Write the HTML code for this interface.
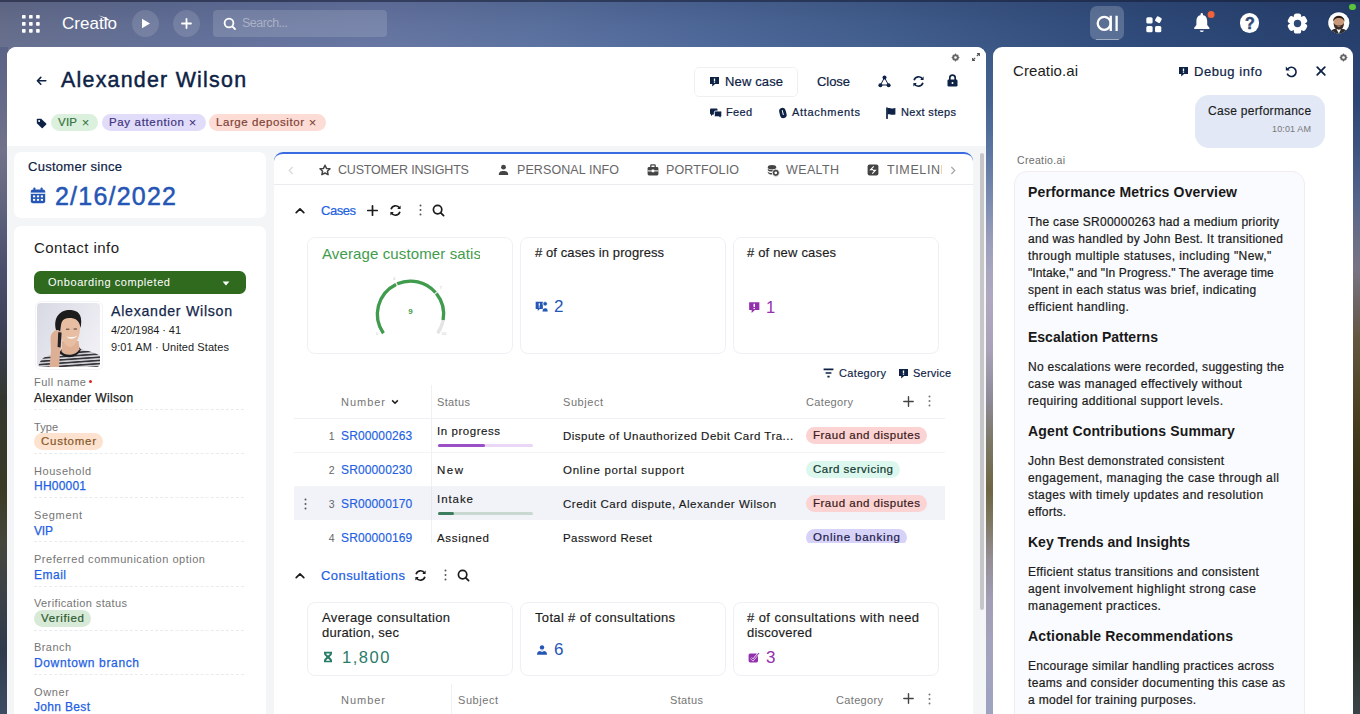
<!DOCTYPE html><html lang="en"><head><meta charset="utf-8"><title>Alexander Wilson</title><style>
*{box-sizing:border-box;margin:0;padding:0}
html,body{width:1360px;height:714px;overflow:hidden}
body{position:relative;font-family:"Liberation Sans",sans-serif;background:#3a4f7d;color:#181818}
.abs,.t,svg.i{position:absolute}
svg.i{overflow:visible}
.t{white-space:pre;display:block}
#bg{left:0;top:0;width:1360px;height:714px;background:linear-gradient(90deg,#69718f 0%,#65729a 12%,#6878a4 28%,#5d74a2 40%,#4f6a9b 52%,#43608f 65%,#395584 75%,#2f4b7b 85%,#27406d 100%)}
#bgl{left:0;top:47px;width:8px;height:667px;background:linear-gradient(180deg,#5a6286 0.0%,#666a88 7.9%,#72728a 15.4%,#62657f 22.9%,#4a4e6c 33.4%,#3d4158 42.4%,#34372f 52.9%,#3a3a25 66.4%,#45463b 73.9%,#3a4048 82.9%,#2f3b4c 90.4%,#3d4b63 100.0%)}
#bgm{left:985px;top:47px;width:9px;height:667px;background:linear-gradient(180deg,#3c5886 0.0%,#46628f 7.9%,#5b74a0 15.4%,#7a8bb0 22.9%,#9a9dba 28.9%,#a7a5bf 33.4%,#b0a8c0 37.9%,#a9a2b8 45.4%,#8e8a98 52.9%,#7c7868 58.9%,#6f6544 66.4%,#7d765f 70.9%,#958e96 76.9%,#a19db5 82.9%,#a4a3bd 90.4%,#9ea3c0 100.0%)}
#bgr{left:1352px;top:47px;width:8px;height:667px;background:linear-gradient(180deg,#28406e 0.0%,#2c4674 7.9%,#3d547f 15.4%,#55648a 22.9%,#6b6f86 28.9%,#787383 33.4%,#6f6668 37.9%,#63563f 43.9%,#4f4424 52.9%,#40381a 58.9%,#332d15 66.4%,#28280f 73.9%,#23271a 82.9%,#2b322c 90.4%,#3a4448 100.0%)}
#bgv{left:0;top:0;width:1360px;height:50px;background:linear-gradient(180deg,rgba(16,24,56,.16) 0%,rgba(16,24,56,.06) 50%,rgba(16,24,56,0) 100%)}
#topline{left:0;top:0;width:1360px;height:1.5px;background:rgba(20,25,50,.55)}
#main{left:7px;top:47px;width:979px;height:667px;background:#f4f5f7;border-radius:9px 9px 0 0;overflow:hidden}
#mainhead{left:0;top:0;width:979px;height:99px;background:#fff}
#side{left:993px;top:47px;width:360px;height:667px;background:#fff;border-radius:9px 9px 0 0;overflow:hidden}
.card{background:#fff;border-radius:7px}
.kpi{background:#fff;border:1px solid #eff0f4;border-radius:8px}
.pill{border-radius:9px;height:17px}
.dash{height:0;border-top:1px dashed #e9ebee}
</style></head><body><div id="bg" class="abs"></div><div id="bgl" class="abs"></div><div id="bgm" class="abs"></div><div id="bgr" class="abs"></div><div id="bgv" class="abs"></div><div id="topline" class="abs"></div><header id="topbar"><svg class="i" style="left:21.6px;top:14.8px" width="18" height="18" viewBox="0 0 18 18" ><rect x="0.00" y="0.00" width="3.6" height="3.6" rx="0.7" fill="#fff"/><rect x="0.00" y="7.05" width="3.6" height="3.6" rx="0.7" fill="#fff"/><rect x="0.00" y="14.10" width="3.6" height="3.6" rx="0.7" fill="#fff"/><rect x="7.05" y="0.00" width="3.6" height="3.6" rx="0.7" fill="#fff"/><rect x="7.05" y="7.05" width="3.6" height="3.6" rx="0.7" fill="#fff"/><rect x="7.05" y="14.10" width="3.6" height="3.6" rx="0.7" fill="#fff"/><rect x="14.10" y="0.00" width="3.6" height="3.6" rx="0.7" fill="#fff"/><rect x="14.10" y="7.05" width="3.6" height="3.6" rx="0.7" fill="#fff"/><rect x="14.10" y="14.10" width="3.6" height="3.6" rx="0.7" fill="#fff"/></svg><span class="t" style="left:62.0px;top:12.5px;font-size:17px;line-height:22px;color:#fff;letter-spacing:0.03px;">Creatio</span><svg class="i" style="left:97.6px;top:14.6px" width="14" height="7" viewBox="0 0 14 7" ><path d="M0.5 0.5 C4.6 1.2 8.8 2.8 12 5.3 L4.6 5.3 L7.4 4 C5.2 2.6 2.8 1.4 0.5 0.5 Z" fill="#fff"/></svg><div class="abs" style="left:131.5px;top:9.5px;width:27px;height:27px;border-radius:50%;background:rgba(255,255,255,.13)"></div><svg class="i" style="left:141px;top:17.5px" width="10" height="11" viewBox="0 0 10 11" ><path d="M1 0.8 L9 5.5 L1 10.2 Z" fill="#fff"/></svg><div class="abs" style="left:172.5px;top:9.5px;width:27px;height:27px;border-radius:50%;background:rgba(255,255,255,.13)"></div><svg class="i" style="left:180.5px;top:17.5px" width="11" height="11" viewBox="0 0 11 11" ><path d="M5.5 1 V10 M1 5.5 H10" stroke="#fff" stroke-width="1.8" stroke-linecap="round"/></svg><div class="abs" style="left:213px;top:10px;width:174px;height:26.5px;border-radius:4px;background:rgba(255,255,255,.14)"></div><svg class="i" style="left:222.5px;top:16.5px" width="14" height="14" viewBox="0 0 14 14" ><circle cx="6" cy="6" r="4.4" fill="none" stroke="#fff" stroke-width="1.8"/><path d="M9.3 9.3 L12 12" stroke="#fff" stroke-width="1.8" stroke-linecap="round"/></svg><span class="t" style="left:242.0px;top:15.0px;font-size:12.5px;line-height:16px;color:rgba(255,255,255,.38);letter-spacing:-0.50px;">Search...</span><div class="abs" style="left:1090px;top:6px;width:34px;height:34px;border-radius:7px;background:rgba(255,255,255,.2)"></div><div class="abs" style="left:1095.5px;top:38.6px;width:23px;height:1.4px;background:rgba(255,255,255,.42);border-radius:1px"></div><svg class="i" style="left:1095px;top:14px" width="24" height="19" viewBox="0 0 24 19" ><title>ai</title><circle cx="9.2" cy="9.3" r="6.5" fill="none" stroke="#fff" stroke-width="2.3"/><path d="M15.75 1.7 V16.9 M21.6 1.7 V16.9" stroke="#fff" stroke-width="2.3"/></svg><svg class="i" style="left:1146px;top:15.5px" width="17" height="17" viewBox="0 0 17 17" ><rect x="0.3" y="1.2" width="6.3" height="6.3" rx="1.5" fill="#fff"/><rect x="0.3" y="9.9" width="6.3" height="6.3" rx="1.5" fill="#fff"/><rect x="9" y="9.9" width="6.3" height="6.3" rx="1.5" fill="#fff"/><rect x="9.6" y="0.9" width="5.6" height="5.6" rx="1.3" fill="#fff" transform="rotate(30 12.4 3.7)"/></svg><svg class="i" style="left:1192px;top:12px" width="24" height="23" viewBox="0 0 24 23" ><path d="M9.8 3 C5.8 3 4.4 6 4.4 9.2 V13 L2.2 15.8 V17 H17.4 V15.8 L15.2 13 V9.2 C15.2 6 13.8 3 9.8 3 Z" fill="#fff"/><path d="M7.7 18.4 A2.2 2.2 0 0 0 11.9 18.4 Z" fill="#fff"/><rect x="8.6" y="1" width="2.4" height="3.4" rx="1.2" fill="#fff"/><circle cx="19.1" cy="2.6" r="3.5" fill="#f0623a"/></svg><div class="abs" style="left:1240px;top:13.3px;width:19.4px;height:19.4px;border-radius:50%;background:#fff"></div><span class="t" style="left:1244.9px;top:12.9px;font-size:16px;line-height:21px;color:#2f4a78;font-weight:700;-webkit-text-stroke:0.5px #2f4a78;">?</span><svg class="i" style="left:1286.5px;top:12.7px" width="21" height="21" viewBox="0 0 21 21" ><g transform="translate(10.5 10.5)"><rect x="-3.7" y="-10.1" width="7.4" height="7" rx="2.6" fill="#fff" transform="rotate(0)"/><rect x="-3.7" y="-10.1" width="7.4" height="7" rx="2.6" fill="#fff" transform="rotate(60)"/><rect x="-3.7" y="-10.1" width="7.4" height="7" rx="2.6" fill="#fff" transform="rotate(120)"/><rect x="-3.7" y="-10.1" width="7.4" height="7" rx="2.6" fill="#fff" transform="rotate(180)"/><rect x="-3.7" y="-10.1" width="7.4" height="7" rx="2.6" fill="#fff" transform="rotate(240)"/><rect x="-3.7" y="-10.1" width="7.4" height="7" rx="2.6" fill="#fff" transform="rotate(300)"/><circle r="7.4" fill="#fff"/><circle r="3.7" fill="#2f4a78"/></g></svg><svg class="i" style="left:1327.6px;top:12.4px" width="22" height="22" viewBox="0 0 22 22" ><defs><clipPath id="avc"><circle cx="10.8" cy="10.8" r="10.6"/></clipPath></defs><circle cx="10.8" cy="10.8" r="11.3" fill="#22395f"/><g clip-path="url(#avc)"><rect width="22" height="22" fill="#fdfdfd"/><path d="M1.6 22 C2.6 17.6 6 16.8 8.2 16.4 L10.8 21.4 L13.4 16.4 C15.6 16.8 19 17.6 20 22 Z" fill="#2c2c31"/><ellipse cx="10.8" cy="10.2" rx="5.2" ry="6.6" fill="#c99879"/><path d="M5.3 9.8 C3.8 2.2 17.8 2.2 16.3 9.8 C15.5 6.8 13.6 5.8 10.8 6 C8 5.8 6.1 6.8 5.3 9.8 Z" fill="#2a1d18"/><path d="M5.6 10.8 C5.8 17 8.6 17.7 10.8 17.7 C13 17.7 15.8 17 16 10.8 C14.8 13.2 13 13.6 10.8 13.6 C8.6 13.6 6.8 13.2 5.6 10.8 Z" fill="#3f2c25"/><path d="M8.8 14 C9.8 15 11.8 15 12.8 14 C11.8 14.4 9.8 14.4 8.8 14 Z" fill="#f6ebe6"/></g></svg><div class="abs" style="left:1349.1px;top:3.9px;width:6.6px;height:6.6px;border-radius:50%;background:#5ac43b"></div></header><main id="main" class="abs"><div id="mainhead" class="abs"><svg class="i" style="left:28.5px;top:29px" width="11" height="10" viewBox="0 0 11 10" ><path d="M9.8 4.8 H1.6 M4.8 1.4 L1.4 4.8 L4.8 8.2" fill="none" stroke="#0d2245" stroke-width="1.6" stroke-linecap="round" stroke-linejoin="round"/></svg><span class="t" style="left:54.0px;top:19.3px;font-size:21.4px;line-height:28px;color:#0d2245;letter-spacing:1.24px;-webkit-text-stroke:0.45px #0d2245;">Alexander Wilson</span><svg class="i" style="left:29px;top:70.5px" width="11" height="11" viewBox="0 0 11 11" ><path d="M0.8 1.6 Q0.8 0.8 1.6 0.8 H5.2 L10.2 5.6 Q10.6 6.1 10.2 6.6 L6.7 10.1 Q6.2 10.5 5.7 10.1 L0.8 5.2 Z" fill="#0d2245"/><circle cx="3.1" cy="3.1" r="1" fill="#fff"/></svg><div class="pill abs" style="left:44px;top:67px;width:47px;height:17px;background:#dcf1dd"></div><span class="t" style="left:51.0px;top:68.3px;font-size:11.5px;line-height:15px;color:#357440;letter-spacing:0.23px;-webkit-text-stroke:0.2px #357440;">VIP</span><span class="t" style="left:74.7px;top:67.3px;font-size:13px;line-height:17px;color:#2f6f3a;">×</span><div class="pill abs" style="left:95px;top:67px;width:103.5px;height:17px;background:#e1dcfa"></div><span class="t" style="left:102.0px;top:68.3px;font-size:11.5px;line-height:15px;color:#40347f;letter-spacing:0.65px;-webkit-text-stroke:0.2px #40347f;">Pay attention</span><span class="t" style="left:181.8px;top:67.3px;font-size:13px;line-height:17px;color:#3b2f78;">×</span><div class="pill abs" style="left:202px;top:67px;width:116.5px;height:17px;background:#fcdcd5"></div><span class="t" style="left:209.0px;top:68.3px;font-size:11.5px;line-height:15px;color:#804236;letter-spacing:0.58px;-webkit-text-stroke:0.2px #804236;">Large depositor</span><span class="t" style="left:301.8px;top:67.3px;font-size:13px;line-height:17px;color:#7a3b30;">×</span><svg class="i" style="left:943.5px;top:5.5px" width="9" height="9" viewBox="0 0 9 9" ><circle cx="4.5" cy="4.5" r="2.5" fill="none" stroke="#666" stroke-width="1.7"/><path d="M4.5 0.6 V8.4 M0.6 4.5 H8.4 M1.8 1.8 L7.2 7.2 M7.2 1.8 L1.8 7.2" stroke="#666" stroke-width="1.1"/><circle cx="4.5" cy="4.5" r="1.3" fill="#fff"/></svg><svg class="i" style="left:965px;top:6px" width="8" height="8" viewBox="0 0 8 8" ><path d="M5 0.6 H7.4 V3 M7.2 0.8 L4.8 3.2 M3 7.4 H0.6 V5 M0.8 7.2 L3.2 4.8" fill="none" stroke="#555" stroke-width="1.1"/></svg><div class="abs" style="left:686.5px;top:19.5px;width:104px;height:30px;border:1px solid #f0f0f2;border-radius:5px;background:#fff"></div><svg class="i" style="left:702px;top:28.5px" width="11" height="12" viewBox="0 0 11 12" ><path d="M1 1 H10 V8 H6 L3.2 10.6 V8 H1 Z" fill="#0d2245"/><path d="M5.5 2.4 V5.4 M5.5 6.2 V7" stroke="#fff" stroke-width="1.3"/></svg><span class="t" style="left:718.0px;top:26.0px;font-size:13px;line-height:17px;color:#0d2245;letter-spacing:0.13px;-webkit-text-stroke:0.2px #0d2245;">New case</span><span class="t" style="left:810.0px;top:26.0px;font-size:13px;line-height:17px;color:#0d2245;letter-spacing:-0.06px;-webkit-text-stroke:0.2px #0d2245;">Close</span><svg class="i" style="left:870.5px;top:27.5px" width="13" height="13" viewBox="0 0 13 13" ><path d="M6.5 2.5 L2.5 10 H10.5 Z" fill="none" stroke="#0d2245" stroke-width="1"/><circle cx="6.5" cy="2.6" r="2" fill="#0d2245"/><circle cx="2.4" cy="10.2" r="2" fill="#0d2245"/><circle cx="10.6" cy="10.2" r="2" fill="#0d2245"/></svg><svg class="i" style="left:904.5px;top:27.5px" width="13" height="13" viewBox="0 0 13 13" ><path d="M10.6 4.2 A4.6 4.6 0 0 0 2.1 5.2 M2.4 8.8 A4.6 4.6 0 0 0 10.9 7.8" fill="none" stroke="#0d2245" stroke-width="1.7"/><path d="M11.6 1.6 V5 H8.2 Z M1.4 11.4 V8 H4.8 Z" fill="#0d2245"/></svg><svg class="i" style="left:940px;top:27px" width="11" height="13" viewBox="0 0 11 13" ><rect x="0.5" y="5.4" width="10" height="7.2" rx="1.4" fill="#0d2245"/><path d="M2.8 6 V3.8 A2.7 2.7 0 0 1 8.2 3.8 V6" fill="none" stroke="#0d2245" stroke-width="1.7"/><circle cx="5.5" cy="9" r="1" fill="#fff"/></svg><svg class="i" style="left:702px;top:59.5px" width="14" height="12" viewBox="0 0 14 12" ><path d="M2.2 1.6 H7.4 Q8.6 1.6 8.6 2.8 V6.2 Q8.6 7.4 7.4 7.4 H3.8 L2 9 V7.4 Q1 7.2 1 6.2 V2.8 Q1 1.6 2.2 1.6 Z" fill="#0d2245"/><path d="M6.6 4 H11.6 Q12.8 4 12.8 5.2 V8.6 Q12.8 9.6 11.8 9.8 V11.4 L10 9.8 H6.6 Q5.4 9.8 5.4 8.6 V5.2 Q5.4 4 6.6 4 Z" fill="#0d2245" stroke="#fff" stroke-width="0.9"/></svg><span class="t" style="left:719.0px;top:58.0px;font-size:11px;line-height:14px;color:#0d2245;letter-spacing:0.31px;-webkit-text-stroke:0.2px #0d2245;">Feed</span><svg class="i" style="left:770.5px;top:59.5px" width="10" height="12" viewBox="0 0 10 12" ><g transform="rotate(-14 5 6)"><rect x="1.6" y="0.8" width="6.6" height="10.4" rx="3.3" fill="#0d2245"/><path d="M4.9 3.4 V7.6" stroke="#fff" stroke-width="1" stroke-linecap="round"/></g></svg><span class="t" style="left:785.0px;top:58.0px;font-size:11px;line-height:14px;color:#0d2245;letter-spacing:0.69px;-webkit-text-stroke:0.2px #0d2245;">Attachments</span><svg class="i" style="left:878px;top:60px" width="12" height="12" viewBox="0 0 12 12" ><path d="M2 1 V11.2" stroke="#0d2245" stroke-width="1.7" stroke-linecap="round"/><path d="M2.4 1.2 C4.4 0.2 6 2.2 10.4 1 V7.4 C6 8.6 4.4 6.6 2.4 7.6 Z" fill="#0d2245"/></svg><span class="t" style="left:894.0px;top:58.0px;font-size:11px;line-height:14px;color:#0d2245;letter-spacing:0.34px;-webkit-text-stroke:0.2px #0d2245;">Next steps</span></div><section id="left"><div class="card abs" style="left:7px;top:105px;width:252px;height:66px;"></div><span class="t" style="left:21.0px;top:110.8px;font-size:13px;line-height:17px;color:#0d2245;letter-spacing:0.28px;-webkit-text-stroke:0.2px #0d2245;">Customer since</span><svg class="i" style="left:23px;top:140px" width="16" height="17" viewBox="0 0 16 17" ><rect x="0.8" y="2.4" width="14.4" height="13.8" rx="2" fill="#2556b5"/><rect x="3.4" y="0.4" width="2" height="4" rx="0.8" fill="#2556b5"/><rect x="10.6" y="0.4" width="2" height="4" rx="0.8" fill="#2556b5"/><rect x="0.8" y="5.6" width="14.4" height="1.2" fill="#fff"/><rect x="3.0" y="8.4" width="2.2" height="1.9" fill="#fff"/><rect x="3.0" y="11.9" width="2.2" height="1.9" fill="#fff"/><rect x="6.9" y="8.4" width="2.2" height="1.9" fill="#fff"/><rect x="6.9" y="11.9" width="2.2" height="1.9" fill="#fff"/><rect x="10.8" y="8.4" width="2.2" height="1.9" fill="#fff"/><rect x="10.8" y="11.9" width="2.2" height="1.9" fill="#fff"/></svg><span class="t" style="left:48.0px;top:133.0px;font-size:25px;line-height:32px;color:#2556b5;letter-spacing:1.22px;-webkit-text-stroke:0.5px #2556b5;">2/16/2022</span><div class="card abs" style="left:7px;top:179px;width:252px;height:500px;"></div><span class="t" style="left:27.0px;top:191.0px;font-size:15px;line-height:20px;color:#1c1c1c;letter-spacing:0.45px;">Contact info</span><div class="abs" style="left:27px;top:223.5px;width:212px;height:23.5px;background:#2f6a1f;border-radius:6.5px"></div><span class="t" style="left:41.0px;top:228.0px;font-size:11px;line-height:14px;color:#fff;letter-spacing:0.56px;">Onboarding completed</span><svg class="i" style="left:214.5px;top:233.5px" width="8" height="5" viewBox="0 0 8 5" ><path d="M0.6 0.6 H7.4 L4 4.4 Z" fill="#fff"/></svg><div class="abs" style="left:27.5px;top:253.5px;width:68px;height:69px;border:1px solid #f3f4f7;border-radius:6px;background:#fff"></div><svg class="i" style="left:30px;top:256px" width="63" height="64" viewBox="0 0 63 64" ><defs><clipPath id="phc"><rect width="63" height="64" rx="4"/></clipPath><linearGradient id="phbg" x1="0" y1="0" x2="1" y2="0.6"><stop offset="0" stop-color="#d9d9e5"/><stop offset="0.6" stop-color="#e6e6ee"/><stop offset="1" stop-color="#efeff4"/></linearGradient><pattern id="str" width="6" height="3.2" patternUnits="userSpaceOnUse" patternTransform="rotate(-4)"><rect width="6" height="3.2" fill="#d9d9dd"/><rect width="6" height="1.7" fill="#34343a"/></pattern><filter id="phb" x="-5%" y="-5%" width="110%" height="110%"><feGaussianBlur stdDeviation="0.45"/></filter></defs><g clip-path="url(#phc)"><rect width="63" height="64" fill="url(#phbg)"/><g filter="url(#phb)"><path d="M1.5 64 C2 58 6 53.5 14 52 L26 48 L42 46 C52 48 60 50 63 53 L63 64 Z" fill="url(#str)"/><path d="M22.5 49 C26 56.5 40 56 44 46.5 L42.5 44.5 L25 46 Z" fill="#1b1b20"/><path d="M25 38 L24.5 48.5 C28 53.5 38.5 53 42.5 46.2 L41.5 38 Z" fill="#dfb094"/><path d="M23.5 24 C23 15 29 12.5 34.5 13 C40.5 13.5 43.5 18 43 26 C42.6 34 39.5 41 35 43.6 C31.5 45.2 27 41 24.5 35 Z" fill="#e8bea2"/><path d="M19 27 C15.5 13 25 5.5 35.5 7.2 C43.5 8.2 45.5 15 43.6 25 C42.6 20 41 16.5 36.5 15.5 C31 14.5 26.5 15 24.6 19.5 C23.6 22.5 23.8 26 23 30 Z" fill="#1c1a1d"/><path d="M29.5 33.2 C32 36.8 37.5 36.6 40 32.8 C37.5 34.3 32 34.5 29.5 33.2 Z" fill="#fbf6f3"/><path d="M29 26.2 H32.4 M36.6 26 H40" stroke="#3a2a24" stroke-width="0.9"/><path d="M20 27 C16.5 27.5 13.5 31 13.5 36 L14 48 L12.5 64 L22 64 L23 49 C24.5 44 24.5 38 24.6 33 C24.6 29.5 22.6 26.8 20 27 Z" fill="#ddb095"/><path d="M21.2 29.2 L24.6 29.6 L23.6 44.6 L20.6 44 Z" fill="#202026"/></g></g></svg><span class="t" style="left:104.0px;top:255.0px;font-size:14.2px;line-height:18px;color:#13274b;letter-spacing:0.71px;-webkit-text-stroke:0.25px #13274b;">Alexander Wilson</span><span class="t" style="left:104.0px;top:275.5px;font-size:11px;line-height:14px;color:#1c1c1c;letter-spacing:-0.07px;">4/20/1984 · 41</span><span class="t" style="left:104.0px;top:293.0px;font-size:11px;line-height:14px;color:#1c1c1c;letter-spacing:0.08px;">9:01 AM · United States</span><span class="t" style="left:27.0px;top:328.4px;font-size:11px;line-height:14px;color:#757575;letter-spacing:0.46px;">Full name</span><div class="abs" style="left:82px;top:332.8px;width:3px;height:3px;border-radius:50%;background:#d92a1c"></div><span class="t" style="left:27.0px;top:343.0px;font-size:12px;line-height:16px;color:#181818;letter-spacing:0.38px;-webkit-text-stroke:0.25px #181818;">Alexander Wilson</span><div class="dash abs" style="left:27px;top:362.0px;width:210px;height:0px;"></div><span class="t" style="left:27.0px;top:372.5px;font-size:11px;line-height:14px;color:#757575;letter-spacing:0.05px;">Type</span><div class="pill abs" style="left:27px;top:386.15px;width:69px;height:17px;background:#fde2cf"></div><span class="t" style="left:34.0px;top:387.1px;font-size:11.5px;line-height:15px;color:#85572a;letter-spacing:0.73px;-webkit-text-stroke:0.2px #85572a;">Customer</span><div class="dash abs" style="left:27px;top:406.15px;width:210px;height:0px;"></div><span class="t" style="left:27.0px;top:416.7px;font-size:11px;line-height:14px;color:#757575;letter-spacing:0.55px;">Household</span><span class="t" style="left:27.0px;top:431.3px;font-size:12px;line-height:16px;color:#235fe3;letter-spacing:0.22px;-webkit-text-stroke:0.25px #235fe3;">HH00001</span><div class="dash abs" style="left:27px;top:450.3px;width:210px;height:0px;"></div><span class="t" style="left:27.0px;top:460.8px;font-size:11px;line-height:14px;color:#757575;letter-spacing:0.66px;">Segment</span><span class="t" style="left:27.0px;top:475.5px;font-size:12px;line-height:16px;color:#235fe3;letter-spacing:-0.17px;-webkit-text-stroke:0.25px #235fe3;">VIP</span><div class="dash abs" style="left:27px;top:494.45000000000005px;width:210px;height:0px;"></div><span class="t" style="left:27.0px;top:505.0px;font-size:11px;line-height:14px;color:#757575;letter-spacing:0.52px;">Preferred communication option</span><span class="t" style="left:27.0px;top:519.6px;font-size:12px;line-height:16px;color:#235fe3;letter-spacing:0.50px;-webkit-text-stroke:0.25px #235fe3;">Email</span><div class="dash abs" style="left:27px;top:538.6px;width:210px;height:0px;"></div><span class="t" style="left:27.0px;top:549.1px;font-size:11px;line-height:14px;color:#757575;letter-spacing:0.38px;">Verification status</span><div class="pill abs" style="left:27px;top:562.75px;width:57px;height:17px;background:#d7ead7"></div><span class="t" style="left:34.0px;top:563.8px;font-size:11.5px;line-height:15px;color:#2d5a2f;letter-spacing:0.66px;-webkit-text-stroke:0.2px #2d5a2f;">Verified</span><div class="dash abs" style="left:27px;top:582.75px;width:210px;height:0px;"></div><span class="t" style="left:27.0px;top:593.3px;font-size:11px;line-height:14px;color:#757575;letter-spacing:0.43px;">Branch</span><span class="t" style="left:27.0px;top:607.9px;font-size:12px;line-height:16px;color:#235fe3;letter-spacing:0.64px;-webkit-text-stroke:0.25px #235fe3;">Downtown branch</span><div class="dash abs" style="left:27px;top:626.9px;width:210px;height:0px;"></div><span class="t" style="left:27.0px;top:637.5px;font-size:11px;line-height:14px;color:#757575;letter-spacing:0.65px;">Owner</span><span class="t" style="left:27.0px;top:652.0px;font-size:12px;line-height:16px;color:#235fe3;letter-spacing:0.33px;-webkit-text-stroke:0.25px #235fe3;">John Best</span><div class="dash abs" style="left:27px;top:671.05px;width:210px;height:0px;"></div></section><section id="center"><div class="abs" style="left:267px;top:104.5px;width:699px;height:580px;background:#fff;border-top:2.6px solid #3a6be0;border-radius:9px 9px 0 0"></div><div class="abs" style="left:267px;top:137.4px;width:699px;height:1px;background:#eaecef"></div><div class="abs" style="left:973px;top:106px;width:4px;height:457px;background:#c6c6c9;border-radius:2px"></div><svg class="i" style="left:281px;top:118.5px" width="6" height="9" viewBox="0 0 6 9" ><path d="M4.6 1 L1.2 4.5 L4.6 8" fill="none" stroke="#d6d8dc" stroke-width="1.2"/></svg><svg class="i" style="left:943px;top:118.5px" width="6" height="9" viewBox="0 0 6 9" ><path d="M1.4 1 L4.8 4.5 L1.4 8" fill="none" stroke="#a3a5a9" stroke-width="1.2"/></svg><svg class="i" style="left:311.5px;top:117px" width="12" height="12" viewBox="0 0 12 12" ><path d="M6 1.2 L7.5 4.4 L11 4.8 L8.4 7.2 L9.1 10.7 L6 9 L2.9 10.7 L3.6 7.2 L1 4.8 L4.5 4.4 Z" fill="none" stroke="#444" stroke-width="1.5" stroke-linejoin="round"/></svg><span class="t" style="left:331.0px;top:115.0px;font-size:12.5px;line-height:16px;color:#666668;letter-spacing:-0.18px;">CUSTOMER INSIGHTS</span><svg class="i" style="left:490.5px;top:117px" width="11" height="12" viewBox="0 0 11 12" ><circle cx="5.5" cy="3.2" r="2.4" fill="#444"/><path d="M0.8 11 C0.8 7.6 2.8 7 5.5 7 C8.2 7 10.2 7.6 10.2 11 Z" fill="#444"/></svg><span class="t" style="left:510.0px;top:115.0px;font-size:12.5px;line-height:16px;color:#666668;letter-spacing:0.09px;">PERSONAL INFO</span><svg class="i" style="left:640px;top:117px" width="12" height="12" viewBox="0 0 12 12" ><path d="M3.8 3 V1.6 Q3.8 0.8 4.6 0.8 H7.4 Q8.2 0.8 8.2 1.6 V3" fill="none" stroke="#444" stroke-width="1.3"/><rect x="0.6" y="3" width="10.8" height="8.4" rx="1.4" fill="#444"/><rect x="0.6" y="6.4" width="10.8" height="1" fill="#fff"/><rect x="4.7" y="5.6" width="2.6" height="2.6" rx="0.5" fill="#fff"/></svg><span class="t" style="left:659.0px;top:115.0px;font-size:12.5px;line-height:16px;color:#666668;letter-spacing:0.12px;">PORTFOLIO</span><svg class="i" style="left:759.5px;top:116.5px" width="13" height="13" viewBox="0 0 13 13" ><ellipse cx="5" cy="3.2" rx="4.2" ry="2.2" fill="#444"/><path d="M0.8 4.6 C1.4 6.6 8.6 6.6 9.2 4.6 V6 C8.6 8 1.4 8 0.8 6 Z" fill="#444"/><path d="M0.8 7.2 C1.2 8.8 4 9.2 5 9.1 V10.6 C3 10.7 1 10 0.8 8.6 Z" fill="#444"/><circle cx="8.8" cy="8.8" r="3.6" fill="#444" stroke="#fff" stroke-width="0.8"/><circle cx="8.8" cy="8.8" r="1.4" fill="#fff"/></svg><span class="t" style="left:779.0px;top:115.0px;font-size:12.5px;line-height:16px;color:#666668;letter-spacing:0.37px;">WEALTH</span><svg class="i" style="left:860px;top:117px" width="12" height="12" viewBox="0 0 12 12" ><rect x="0.6" y="0.6" width="10.8" height="10.8" rx="2" fill="#444"/><path d="M6.8 2.4 L3.6 5.6 H6 M5.2 9.6 L8.4 6.4 H6" fill="none" stroke="#fff" stroke-width="1.1"/></svg><div class="abs" style="left:880px;top:113px;width:55.3px;height:20px;overflow:hidden"><span class="t" style="left:0.0px;top:2.0px;font-size:12.5px;line-height:16px;color:#666668;letter-spacing:0.62px;">TIMELINE</span></div><svg class="i" style="left:288px;top:159.5px" width="10" height="7" viewBox="0 0 10 7" ><path d="M1.2 5.6 L5 1.8 L8.8 5.6" fill="none" stroke="#1c1c1c" stroke-width="1.7" stroke-linecap="round" stroke-linejoin="round"/></svg><span class="t" style="left:314.0px;top:154.5px;font-size:13px;line-height:17px;color:#235fe3;letter-spacing:-0.46px;-webkit-text-stroke:0.2px #235fe3;">Cases</span><svg class="i" style="left:359.5px;top:157.5px" width="11" height="11" viewBox="0 0 11 11" ><path d="M5.5 0.8 V10.2 M0.8 5.5 H10.2" stroke="#1c1c1c" stroke-width="1.7" stroke-linecap="round"/></svg><svg class="i" style="left:382px;top:156.5px" width="13" height="13" viewBox="0 0 13 13" ><path d="M10.6 4.2 A4.6 4.6 0 0 0 2.1 5.2 M2.4 8.8 A4.6 4.6 0 0 0 10.9 7.8" fill="none" stroke="#1c1c1c" stroke-width="1.7"/><path d="M11.6 1.6 V5 H8.2 Z M1.4 11.4 V8 H4.8 Z" fill="#1c1c1c"/></svg><svg class="i" style="left:411.5px;top:157px" width="3" height="12" viewBox="0 0 3 12" ><circle cx="1.5" cy="1.6" r="1" fill="#555"/><circle cx="1.5" cy="6" r="1" fill="#555"/><circle cx="1.5" cy="10.4" r="1" fill="#555"/></svg><svg class="i" style="left:425px;top:156.5px" width="13" height="13" viewBox="0 0 13 13" ><circle cx="5.6" cy="5.6" r="4.2" fill="none" stroke="#1c1c1c" stroke-width="1.7"/><path d="M8.8 8.8 L11.6 11.6" stroke="#1c1c1c" stroke-width="1.8" stroke-linecap="round"/></svg><div class="kpi abs" style="left:300px;top:189.5px;width:206px;height:117px;"></div><div class="kpi abs" style="left:513px;top:189.5px;width:206px;height:117px;"></div><div class="kpi abs" style="left:726px;top:189.5px;width:206px;height:117px;"></div><div class="abs" style="left:315px;top:197px;width:158px;height:22px;overflow:hidden"><span class="t" style="left:0.0px;top:0.0px;font-size:15px;line-height:20px;color:#3f9c4c;letter-spacing:0.12px;">Average customer satisfaction</span></div><svg class="i" style="left:365px;top:227px" width="78" height="64" viewBox="0 0 78 64" ><path d="M11.39 59.19 A33.10 33.10 0 1 1 65.61 59.19" fill="none" stroke="#e4e4e7" stroke-width="3.3"/><path d="M11.39 59.19 A33.10 33.10 0 0 1 23.99 10.45" fill="none" stroke="#3f9c4c" stroke-width="3.3"/><path d="M25.30 9.85 A33.10 33.10 0 0 1 63.48 18.48" fill="none" stroke="#3f9c4c" stroke-width="3.3"/><path d="M64.40 19.59 A33.10 33.10 0 0 1 71.10 45.95" fill="none" stroke="#3f9c4c" stroke-width="3.3"/></svg><span class="t" style="left:401.3px;top:259.5px;font-size:8px;line-height:10px;color:#3f9c4c;font-weight:700;">9</span><span class="t" style="left:368.9px;top:283.5px;font-size:4px;line-height:5px;color:#c4c4c4;">0</span><span class="t" style="left:385.9px;top:229.0px;font-size:4px;line-height:5px;color:#c4c4c4;">4</span><span class="t" style="left:432.4px;top:237.5px;font-size:4px;line-height:5px;color:#c4c4c4;">7</span><span class="t" style="left:434.8px;top:283.5px;font-size:4px;line-height:5px;color:#c4c4c4;">10</span><span class="t" style="left:528.0px;top:196.5px;font-size:13px;line-height:17px;color:#1c1c1c;letter-spacing:0.09px;-webkit-text-stroke:0.15px #1c1c1c;"># of cases in progress</span><svg class="i" style="left:528.3px;top:252.8px" width="13.5" height="13.5" viewBox="0 0 12 12" ><path d="M0.6 1.6 H7 V8 H4.2 L2.4 9.8 V8 H0.6 Z" fill="#2456b4"/><path d="M3.8 2.8 V5 M3.8 5.8 V6.6" stroke="#fff" stroke-width="1.1"/><circle cx="9" cy="3.4" r="2" fill="#2456b4" stroke="#fff" stroke-width="0.7"/><path d="M6.4 10.6 C6.4 7.6 7.6 7 9.2 7 C10.6 7 11.6 7.6 11.6 10.6 Z" fill="#2456b4" stroke="#fff" stroke-width="0.7"/></svg><span class="t" style="left:547.0px;top:249.0px;font-size:17px;line-height:22px;color:#2456b4;">2</span><span class="t" style="left:740.0px;top:196.5px;font-size:13px;line-height:17px;color:#1c1c1c;letter-spacing:0.18px;-webkit-text-stroke:0.15px #1c1c1c;"># of new cases</span><svg class="i" style="left:741px;top:253.5px" width="12.5" height="13.6" viewBox="0 0 11 12" ><path d="M1 1 H10 V8 H6 L3.2 10.6 V8 H1 Z" fill="#9230ae"/><path d="M5.5 2.4 V5.4 M5.5 6.2 V7" stroke="#fff" stroke-width="1.3"/></svg><span class="t" style="left:759.0px;top:249.5px;font-size:16.5px;line-height:21px;color:#9230ae;">1</span><svg class="i" style="left:816px;top:321px" width="11" height="10" viewBox="0 0 11 10" ><path d="M0.6 1.4 H10.4 M2.6 5 H8.4 M4.4 8.6 H6.6" stroke="#0d2245" stroke-width="1.6"/></svg><span class="t" style="left:832.0px;top:319.0px;font-size:11px;line-height:14px;color:#0d2245;letter-spacing:0.34px;-webkit-text-stroke:0.15px #0d2245;">Category</span><svg class="i" style="left:891px;top:320.5px" width="11" height="12" viewBox="0 0 11 12" ><path d="M1 1 H10 V8 H6 L3.2 10.6 V8 H1 Z" fill="#0d2245"/><path d="M5.5 2.4 V5.4 M5.5 6.2 V7" stroke="#fff" stroke-width="1.3"/></svg><span class="t" style="left:906.0px;top:319.0px;font-size:11px;line-height:14px;color:#0d2245;letter-spacing:0.22px;-webkit-text-stroke:0.15px #0d2245;">Service</span><div class="abs" style="left:287px;top:338px;width:651px;height:157.5px;overflow:hidden"><div class="abs" style="left:137px;top:0px;width:1px;height:160px;background:#f0f1f4"></div><span class="t" style="left:47.0px;top:9.5px;font-size:11px;line-height:14px;color:#757575;letter-spacing:0.97px;">Number</span><svg class="i" style="left:97px;top:14px" width="8" height="6" viewBox="0 0 8 6" ><path d="M1.2 1.4 L4 4.2 L6.8 1.4" fill="none" stroke="#1c1c1c" stroke-width="1.5"/></svg><span class="t" style="left:143.0px;top:9.5px;font-size:11px;line-height:14px;color:#757575;letter-spacing:0.36px;">Status</span><span class="t" style="left:269.0px;top:9.5px;font-size:11px;line-height:14px;color:#757575;letter-spacing:0.55px;">Subject</span><span class="t" style="left:512.0px;top:9.5px;font-size:11px;line-height:14px;color:#757575;letter-spacing:0.34px;">Category</span><svg class="i" style="left:608.5px;top:10.5px" width="11" height="11" viewBox="0 0 11 11" ><path d="M5.5 0.8 V10.2 M0.8 5.5 H10.2" stroke="#444" stroke-width="1.4" stroke-linecap="round"/></svg><svg class="i" style="left:633.5px;top:10px" width="3" height="12" viewBox="0 0 3 12" ><circle cx="1.5" cy="1.6" r="1" fill="#777"/><circle cx="1.5" cy="6" r="1" fill="#777"/><circle cx="1.5" cy="10.4" r="1" fill="#777"/></svg><div class="abs" style="left:0px;top:33px;width:651px;height:1px;background:#f0f1f4"></div><div class="abs" style="left:0px;top:67.0px;width:651px;height:1px;background:#f3f4f6"></div><span class="t" style="left:34.7px;top:44.0px;font-size:10.5px;line-height:14px;color:#666;">1</span><span class="t" style="left:47.0px;top:42.5px;font-size:12px;line-height:16px;color:#235fe3;letter-spacing:0.13px;-webkit-text-stroke:0.15px #235fe3;">SR00000263</span><span class="t" style="left:143.0px;top:38.5px;font-size:11.5px;line-height:15px;color:#181818;letter-spacing:0.55px;-webkit-text-stroke:0.15px #181818;">In progress</span><div class="abs" style="left:144px;top:58.5px;width:95px;height:3.8px;background:#ead6f5;border-radius:2px"><div style="width:47px;height:3.8px;background:#9a4fc6;border-radius:2px"></div></div><span class="t" style="left:269.0px;top:44.0px;font-size:11.5px;line-height:15px;color:#181818;letter-spacing:0.48px;-webkit-text-stroke:0.15px #181818;">Dispute of Unauthorized Debit Card Tra...</span><div class="pill abs" style="left:512px;top:42.0px;width:121px;height:17px;background:#fbd3d3"></div><span class="t" style="left:519.0px;top:43.0px;font-size:11.5px;line-height:15px;color:#3a1a1a;letter-spacing:0.50px;-webkit-text-stroke:0.2px #3a1a1a;">Fraud and disputes</span><div class="abs" style="left:0px;top:101.0px;width:651px;height:1px;background:#f3f4f6"></div><span class="t" style="left:34.7px;top:78.0px;font-size:10.5px;line-height:14px;color:#666;">2</span><span class="t" style="left:47.0px;top:76.5px;font-size:12px;line-height:16px;color:#235fe3;letter-spacing:0.13px;-webkit-text-stroke:0.15px #235fe3;">SR00000230</span><span class="t" style="left:143.0px;top:78.0px;font-size:11.5px;line-height:15px;color:#181818;letter-spacing:1.49px;-webkit-text-stroke:0.15px #181818;">New</span><span class="t" style="left:269.0px;top:78.0px;font-size:11.5px;line-height:15px;color:#181818;letter-spacing:0.71px;-webkit-text-stroke:0.15px #181818;">Online portal support</span><div class="pill abs" style="left:512px;top:76.0px;width:94px;height:17px;background:#dbf7ee"></div><span class="t" style="left:519.0px;top:77.0px;font-size:11.5px;line-height:15px;color:#14382e;letter-spacing:0.50px;-webkit-text-stroke:0.2px #14382e;">Card servicing</span><div class="abs" style="left:0px;top:101.5px;width:651px;height:33.5px;background:#f1f3f8"></div><svg class="i" style="left:9.5px;top:112.5px" width="3" height="12" viewBox="0 0 3 12" ><circle cx="1.5" cy="1.6" r="1" fill="#555"/><circle cx="1.5" cy="6" r="1" fill="#555"/><circle cx="1.5" cy="10.4" r="1" fill="#555"/></svg><div class="abs" style="left:137px;top:101.5px;width:1px;height:33.5px;background:#e6e8ee"></div><span class="t" style="left:34.7px;top:112.0px;font-size:10.5px;line-height:14px;color:#666;">3</span><span class="t" style="left:47.0px;top:110.5px;font-size:12px;line-height:16px;color:#235fe3;letter-spacing:0.13px;-webkit-text-stroke:0.15px #235fe3;">SR00000170</span><span class="t" style="left:143.0px;top:106.5px;font-size:11.5px;line-height:15px;color:#181818;letter-spacing:0.93px;-webkit-text-stroke:0.15px #181818;">Intake</span><div class="abs" style="left:144px;top:126.5px;width:95px;height:3.8px;background:#c9d9d2;border-radius:2px"><div style="width:16px;height:3.8px;background:#3b7d5e;border-radius:2px"></div></div><span class="t" style="left:269.0px;top:112.0px;font-size:11.5px;line-height:15px;color:#181818;letter-spacing:0.52px;-webkit-text-stroke:0.15px #181818;">Credit Card dispute, Alexander Wilson</span><div class="pill abs" style="left:512px;top:110.0px;width:121px;height:17px;background:#fbd3d3"></div><span class="t" style="left:519.0px;top:111.0px;font-size:11.5px;line-height:15px;color:#3a1a1a;letter-spacing:0.50px;-webkit-text-stroke:0.2px #3a1a1a;">Fraud and disputes</span><span class="t" style="left:34.7px;top:146.0px;font-size:10.5px;line-height:14px;color:#666;">4</span><span class="t" style="left:47.0px;top:144.5px;font-size:12px;line-height:16px;color:#235fe3;letter-spacing:0.13px;-webkit-text-stroke:0.15px #235fe3;">SR00000169</span><span class="t" style="left:143.0px;top:146.0px;font-size:11.5px;line-height:15px;color:#181818;letter-spacing:0.67px;-webkit-text-stroke:0.15px #181818;">Assigned</span><span class="t" style="left:269.0px;top:146.0px;font-size:11.5px;line-height:15px;color:#181818;letter-spacing:0.41px;-webkit-text-stroke:0.15px #181818;">Password Reset</span><div class="pill abs" style="left:512px;top:144.0px;width:101px;height:17px;background:#d7d3f8"></div><span class="t" style="left:519.0px;top:145.0px;font-size:11.5px;line-height:15px;color:#1e1a4a;letter-spacing:0.79px;-webkit-text-stroke:0.2px #1e1a4a;">Online banking</span></div><svg class="i" style="left:288px;top:524.5px" width="10" height="7" viewBox="0 0 10 7" ><path d="M1.2 5.6 L5 1.8 L8.8 5.6" fill="none" stroke="#1c1c1c" stroke-width="1.7" stroke-linecap="round" stroke-linejoin="round"/></svg><span class="t" style="left:314.0px;top:519.5px;font-size:13px;line-height:17px;color:#235fe3;letter-spacing:0.43px;-webkit-text-stroke:0.2px #235fe3;">Consultations</span><svg class="i" style="left:407px;top:521.5px" width="13" height="13" viewBox="0 0 13 13" ><path d="M10.6 4.2 A4.6 4.6 0 0 0 2.1 5.2 M2.4 8.8 A4.6 4.6 0 0 0 10.9 7.8" fill="none" stroke="#1c1c1c" stroke-width="1.7"/><path d="M11.6 1.6 V5 H8.2 Z M1.4 11.4 V8 H4.8 Z" fill="#1c1c1c"/></svg><svg class="i" style="left:436.5px;top:522px" width="3" height="12" viewBox="0 0 3 12" ><circle cx="1.5" cy="1.6" r="1" fill="#555"/><circle cx="1.5" cy="6" r="1" fill="#555"/><circle cx="1.5" cy="10.4" r="1" fill="#555"/></svg><svg class="i" style="left:450px;top:521.5px" width="13" height="13" viewBox="0 0 13 13" ><circle cx="5.6" cy="5.6" r="4.2" fill="none" stroke="#1c1c1c" stroke-width="1.7"/><path d="M8.8 8.8 L11.6 11.6" stroke="#1c1c1c" stroke-width="1.8" stroke-linecap="round"/></svg><div class="kpi abs" style="left:300px;top:554.5px;width:206px;height:74.8px;"></div><div class="kpi abs" style="left:513px;top:554.5px;width:206px;height:74.8px;"></div><div class="kpi abs" style="left:726px;top:554.5px;width:206px;height:74.8px;"></div><span class="t" style="left:315.0px;top:561.5px;font-size:13px;line-height:17px;color:#1c1c1c;letter-spacing:0.36px;-webkit-text-stroke:0.15px #1c1c1c;">Average consultation</span><span class="t" style="left:315.0px;top:577.0px;font-size:13px;line-height:17px;color:#1c1c1c;letter-spacing:0.21px;-webkit-text-stroke:0.15px #1c1c1c;">duration, sec</span><svg class="i" style="left:316px;top:604px" width="10" height="12" viewBox="0 0 10 12" ><path d="M1 0.8 H9 V2.4 C9 4.4 6.6 5.2 6.6 6 C6.6 6.8 9 7.6 9 9.6 V11.2 H1 V9.6 C1 7.6 3.4 6.8 3.4 6 C3.4 5.2 1 4.4 1 2.4 Z" fill="#2a7a68"/><path d="M3 2.6 H7 C6.6 3.8 5.6 4.2 5 4.6 C4.4 4.2 3.4 3.8 3 2.6 Z M3 9.8 C3.4 8.6 4.4 8.4 5 7.6 C5.6 8.4 6.6 8.6 7 9.8 Z" fill="#fff"/></svg><span class="t" style="left:335.0px;top:600.0px;font-size:16.5px;line-height:21px;color:#2a7a68;letter-spacing:1.55px;">1,800</span><span class="t" style="left:528.0px;top:561.5px;font-size:13px;line-height:17px;color:#1c1c1c;letter-spacing:0.34px;-webkit-text-stroke:0.15px #1c1c1c;">Total # of consultations</span><svg class="i" style="left:529px;top:597px" width="12" height="12" viewBox="0 0 12 12" ><circle cx="6" cy="3.4" r="2.2" fill="#2456b4"/><path d="M1 10.8 C1 7.6 3 6.8 6 6.8 C9 6.8 11 7.6 11 10.8 Z" fill="#2456b4"/><path d="M3.4 6.2 L6 7.6 L8.6 6.2" fill="none" stroke="#fff" stroke-width="0.9"/></svg><span class="t" style="left:547.0px;top:592.0px;font-size:17px;line-height:22px;color:#2456b4;">6</span><span class="t" style="left:740.0px;top:561.5px;font-size:13px;line-height:17px;color:#1c1c1c;letter-spacing:0.43px;-webkit-text-stroke:0.15px #1c1c1c;"># of consultations with need</span><span class="t" style="left:740.0px;top:577.0px;font-size:13px;line-height:17px;color:#1c1c1c;letter-spacing:0.24px;-webkit-text-stroke:0.15px #1c1c1c;">discovered</span><svg class="i" style="left:741px;top:604.5px" width="12" height="11" viewBox="0 0 12 11" ><rect x="0.6" y="1.4" width="9.4" height="9" rx="1.6" fill="#9230ae"/><path d="M3 6 L5 8 L10.6 1.4" fill="none" stroke="#fff" stroke-width="2.2"/><path d="M3 6 L5 8 L11 1" fill="none" stroke="#9230ae" stroke-width="1.1"/></svg><span class="t" style="left:759.0px;top:599.5px;font-size:17px;line-height:22px;color:#9230ae;">3</span><div class="abs" style="left:444px;top:637px;width:1px;height:40px;background:#f0f1f4"></div><span class="t" style="left:334.0px;top:645.8px;font-size:11px;line-height:14px;color:#757575;letter-spacing:0.97px;">Number</span><span class="t" style="left:451.0px;top:645.8px;font-size:11px;line-height:14px;color:#757575;letter-spacing:0.55px;">Subject</span><span class="t" style="left:663.0px;top:645.8px;font-size:11px;line-height:14px;color:#757575;letter-spacing:0.36px;">Status</span><span class="t" style="left:829.0px;top:645.8px;font-size:11px;line-height:14px;color:#757575;letter-spacing:0.34px;">Category</span><svg class="i" style="left:895.5px;top:646.3px" width="11" height="11" viewBox="0 0 11 11" ><path d="M5.5 0.8 V10.2 M0.8 5.5 H10.2" stroke="#444" stroke-width="1.4" stroke-linecap="round"/></svg><svg class="i" style="left:920.5px;top:645.8px" width="3" height="12" viewBox="0 0 3 12" ><circle cx="1.5" cy="1.6" r="1" fill="#777"/><circle cx="1.5" cy="6" r="1" fill="#777"/><circle cx="1.5" cy="10.4" r="1" fill="#777"/></svg></section></main><aside id="side" class="abs"><span class="t" style="left:20.0px;top:14.0px;font-size:15px;line-height:20px;color:#1c1c1c;letter-spacing:0.09px;">Creatio.ai</span><svg class="i" style="left:185px;top:18.5px" width="11" height="12" viewBox="0 0 11 12" ><path d="M1 1 H10 V8 H6 L3.2 10.6 V8 H1 Z" fill="#0d2245"/><path d="M5.5 2.4 V5.4 M5.5 6.2 V7" stroke="#fff" stroke-width="1.3"/></svg><span class="t" style="left:201.0px;top:15.5px;font-size:13px;line-height:17px;color:#0d2245;letter-spacing:0.57px;-webkit-text-stroke:0.2px #0d2245;">Debug info</span><svg class="i" style="left:291.5px;top:18px" width="13" height="13" viewBox="0 0 13 13" ><path d="M2.6 4.4 A4.6 4.6 0 1 1 2.2 8.6" fill="none" stroke="#0d2245" stroke-width="1.6"/><path d="M0.8 1.6 V5.6 H4.8 Z" fill="#0d2245"/></svg><svg class="i" style="left:323px;top:19px" width="10" height="10" viewBox="0 0 10 10" ><path d="M1.2 1.2 L8.8 8.8 M8.8 1.2 L1.2 8.8" stroke="#0d2245" stroke-width="1.8" stroke-linecap="round"/></svg><svg class="i" style="left:346px;top:5.5px" width="9" height="9" viewBox="0 0 9 9" ><circle cx="4.5" cy="4.5" r="2.5" fill="none" stroke="#666" stroke-width="1.7"/><path d="M4.5 0.6 V8.4 M0.6 4.5 H8.4 M1.8 1.8 L7.2 7.2 M7.2 1.8 L1.8 7.2" stroke="#666" stroke-width="1.1"/><circle cx="4.5" cy="4.5" r="1.3" fill="#fff"/></svg><div class="abs" style="left:202px;top:47.5px;width:130px;height:53px;background:#e2e8f6;border-radius:14px"></div><span class="t" style="left:215.0px;top:55.5px;font-size:12px;line-height:16px;color:#1c1c1c;letter-spacing:0.29px;-webkit-text-stroke:0.15px #1c1c1c;">Case performance</span><span class="t" style="left:279.0px;top:76.0px;font-size:9px;line-height:12px;color:#777;letter-spacing:0.14px;">10:01 AM</span><span class="t" style="left:24.0px;top:105.8px;font-size:10.5px;line-height:14px;color:#6d6d6d;letter-spacing:0.34px;">Creatio.ai</span><div class="abs" style="left:20.5px;top:123.5px;width:291px;height:560px;background:#fafbfe;border:1px solid #f2ebf2;border-radius:13px"></div><span class="t" style="left:35.0px;top:135.8px;font-size:14px;line-height:18px;color:#181818;font-weight:700;letter-spacing:0.16px;">Performance Metrics Overview</span><span class="t" style="left:35.0px;top:166.8px;font-size:12px;line-height:16px;color:#1c1c1c;letter-spacing:0.24px;-webkit-text-stroke:0.22px #1c1c1c;">The case SR00000263 had a medium priority</span><span class="t" style="left:35.0px;top:183.8px;font-size:12px;line-height:16px;color:#1c1c1c;letter-spacing:0.29px;-webkit-text-stroke:0.22px #1c1c1c;">and was handled by John Best. It transitioned</span><span class="t" style="left:35.0px;top:200.8px;font-size:12px;line-height:16px;color:#1c1c1c;letter-spacing:0.41px;-webkit-text-stroke:0.22px #1c1c1c;">through multiple statuses, including &quot;New,&quot;</span><span class="t" style="left:35.0px;top:217.8px;font-size:12px;line-height:16px;color:#1c1c1c;letter-spacing:0.11px;-webkit-text-stroke:0.22px #1c1c1c;">&quot;Intake,&quot; and &quot;In Progress.&quot; The average time</span><span class="t" style="left:35.0px;top:234.8px;font-size:12px;line-height:16px;color:#1c1c1c;letter-spacing:0.31px;-webkit-text-stroke:0.22px #1c1c1c;">spent in each status was brief, indicating</span><span class="t" style="left:35.0px;top:251.8px;font-size:12px;line-height:16px;color:#1c1c1c;letter-spacing:0.43px;-webkit-text-stroke:0.22px #1c1c1c;">efficient handling.</span><span class="t" style="left:35.0px;top:280.8px;font-size:14px;line-height:18px;color:#181818;font-weight:700;">Escalation Patterns</span><span class="t" style="left:35.0px;top:311.8px;font-size:12px;line-height:16px;color:#1c1c1c;letter-spacing:0.29px;-webkit-text-stroke:0.22px #1c1c1c;">No escalations were recorded, suggesting the</span><span class="t" style="left:35.0px;top:328.8px;font-size:12px;line-height:16px;color:#1c1c1c;letter-spacing:0.36px;-webkit-text-stroke:0.22px #1c1c1c;">case was managed effectively without</span><span class="t" style="left:35.0px;top:345.8px;font-size:12px;line-height:16px;color:#1c1c1c;letter-spacing:0.37px;-webkit-text-stroke:0.22px #1c1c1c;">requiring additional support levels.</span><span class="t" style="left:35.0px;top:374.8px;font-size:14px;line-height:18px;color:#181818;font-weight:700;letter-spacing:0.15px;">Agent Contributions Summary</span><span class="t" style="left:35.0px;top:405.8px;font-size:12px;line-height:16px;color:#1c1c1c;letter-spacing:0.27px;-webkit-text-stroke:0.22px #1c1c1c;">John Best demonstrated consistent</span><span class="t" style="left:35.0px;top:422.8px;font-size:12px;line-height:16px;color:#1c1c1c;letter-spacing:0.42px;-webkit-text-stroke:0.22px #1c1c1c;">engagement, managing the case through all</span><span class="t" style="left:35.0px;top:439.8px;font-size:12px;line-height:16px;color:#1c1c1c;letter-spacing:0.39px;-webkit-text-stroke:0.22px #1c1c1c;">stages with timely updates and resolution</span><span class="t" style="left:35.0px;top:456.8px;font-size:12px;line-height:16px;color:#1c1c1c;letter-spacing:0.22px;-webkit-text-stroke:0.22px #1c1c1c;">efforts.</span><span class="t" style="left:35.0px;top:485.8px;font-size:14px;line-height:18px;color:#181818;font-weight:700;letter-spacing:0.01px;">Key Trends and Insights</span><span class="t" style="left:35.0px;top:516.8px;font-size:12px;line-height:16px;color:#1c1c1c;letter-spacing:0.34px;-webkit-text-stroke:0.22px #1c1c1c;">Efficient status transitions and consistent</span><span class="t" style="left:35.0px;top:533.8px;font-size:12px;line-height:16px;color:#1c1c1c;letter-spacing:0.45px;-webkit-text-stroke:0.22px #1c1c1c;">agent involvement highlight strong case</span><span class="t" style="left:35.0px;top:550.8px;font-size:12px;line-height:16px;color:#1c1c1c;letter-spacing:0.41px;-webkit-text-stroke:0.22px #1c1c1c;">management practices.</span><span class="t" style="left:35.0px;top:579.8px;font-size:14px;line-height:18px;color:#181818;font-weight:700;letter-spacing:0.17px;">Actionable Recommendations</span><span class="t" style="left:35.0px;top:610.8px;font-size:12px;line-height:16px;color:#1c1c1c;letter-spacing:0.27px;-webkit-text-stroke:0.22px #1c1c1c;">Encourage similar handling practices across</span><span class="t" style="left:35.0px;top:627.8px;font-size:12px;line-height:16px;color:#1c1c1c;letter-spacing:0.32px;-webkit-text-stroke:0.22px #1c1c1c;">teams and consider documenting this case as</span><span class="t" style="left:35.0px;top:644.8px;font-size:12px;line-height:16px;color:#1c1c1c;letter-spacing:0.32px;-webkit-text-stroke:0.22px #1c1c1c;">a model for training purposes.</span></aside></body></html>
